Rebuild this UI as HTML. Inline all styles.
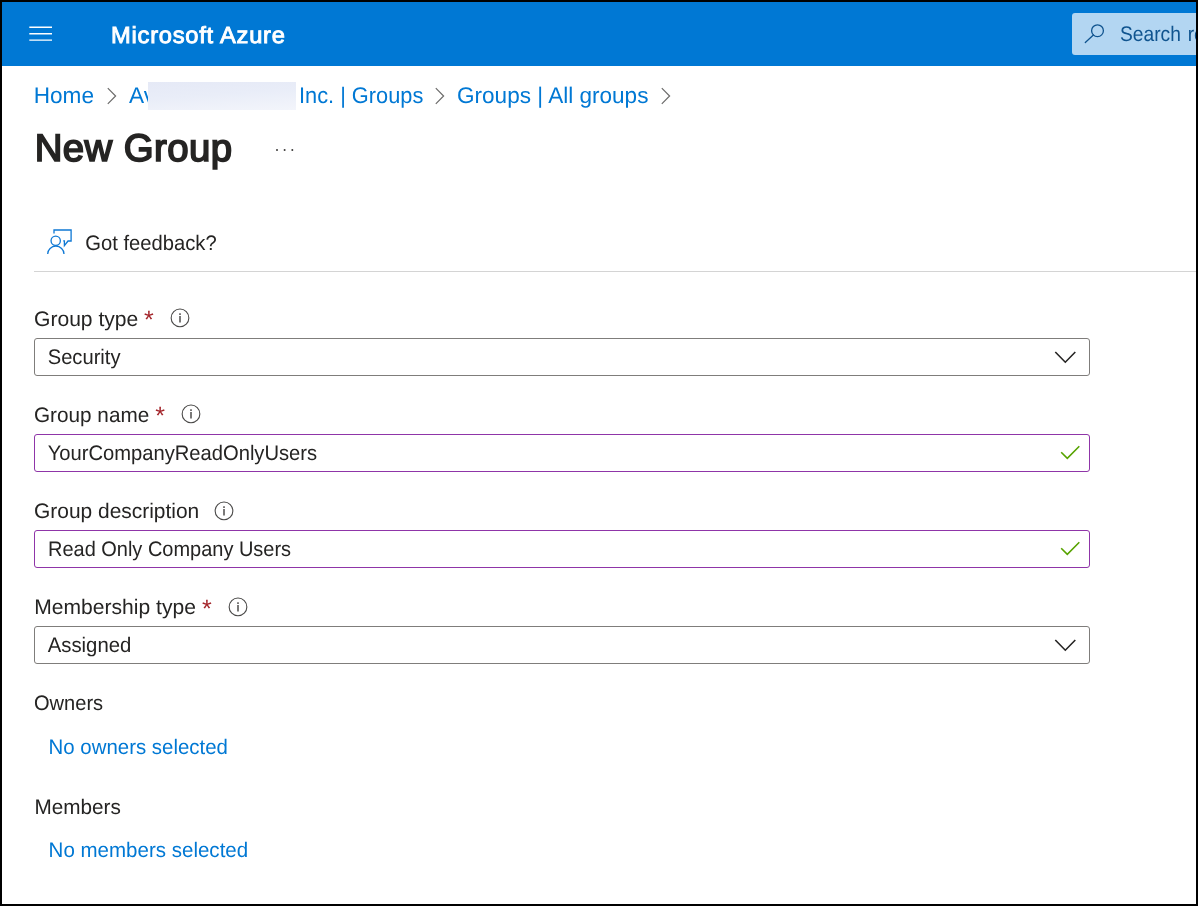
<!DOCTYPE html>
<html lang="en">
<head>
<meta charset="utf-8">
<title>New Group - Microsoft Azure</title>
<style>
*{box-sizing:border-box;margin:0;padding:0}
html,body{width:1198px;height:906px;overflow:hidden;background:#fff}
body{font-family:"Liberation Sans",sans-serif;color:#252423;position:relative;text-rendering:geometricPrecision}
#page{position:absolute;left:0;top:0;width:1198px;height:906px;overflow:hidden;background:#fff;will-change:transform}
.edge{position:absolute;background:#000;z-index:10}
.t{position:absolute;white-space:nowrap;line-height:30px;height:30px;font-size:21px;font-weight:normal;transform-origin:0 50%}
header{position:absolute;left:0;top:0;width:1198px;height:66px;background:#0078d4}
.brand{color:#fff;font-weight:normal;-webkit-text-stroke:.9px #fff;font-size:23.3px;left:111px;top:20px;letter-spacing:.75px;transform:scaleX(1.017)}
.search{position:absolute;left:1072px;top:13px;width:200px;height:42px;border-radius:3px;background:#b3d6f2;overflow:hidden}
.search .t{color:#10548f;left:48px;top:7px;font-size:21px;word-spacing:1.6px;transform:scaleX(.915);transform-origin:0 50%}
.crumb{color:#0078d4;font-size:22.6px;top:81px}
.sep{position:absolute;top:87px;width:12px;height:18px}
.redact{position:absolute;left:148px;top:82px;width:148px;height:28px;background:linear-gradient(176deg,#e5e9f6 0%,#e9edf8 45%,#f3f5fb 100%)}
h1.t{font-size:38.4px;font-weight:normal;-webkit-text-stroke:1.7px #252423;line-height:44px;height:44px;left:34.7px;top:127px;letter-spacing:.4px}
.more{position:absolute;left:275px;top:147.9px;width:20px;height:4px}
.rule{position:absolute;left:34px;top:271px;width:1164px;height:1px;background:#d4d4d4}
.req{color:#a4262c;font-size:25px;letter-spacing:0}
.box{position:absolute;left:34px;width:1056px;height:38px;border:1px solid #7f7d7b;border-radius:3px;background:#fff}
.box.v{border-color:#8f35a8}
.link{color:#0078d4}
svg{position:absolute;overflow:visible}
.info{width:20px;height:20px}
.ind{left:1052px;width:30px;height:20px}
</style>
</head>
<body>
<div id="page">
  <header>
    <svg style="left:29px;top:26px" width="24" height="16" viewBox="0 0 24 16"><path d="M0.3 1.3H23M0.3 7.8H23M0.3 14.1H23" stroke="#fff" stroke-width="1.4" fill="none"/></svg>
    <div class="t brand">Microsoft Azure</div>
    <div class="search">
      <svg style="left:12px;top:10px" width="28" height="24" viewBox="0 0 28 24"><circle cx="13.5" cy="7.7" r="5.9" fill="none" stroke="#10548f" stroke-width="1.3"/><path d="M9.4 12 L1.3 19.5" stroke="#10548f" stroke-width="1.3" fill="none" stroke-linecap="round"/></svg>
      <div class="t">Search resources, services, and docs (G+/)</div>
    </div>
  </header>

  <nav>
    <div class="t crumb" style="left:33.7px">Home</div>
    <svg class="sep" style="left:106px" viewBox="0 0 12 18"><path d="M1.8 1.2 L9.6 9 L1.8 16.8" fill="none" stroke="#6b6a69" stroke-width="1.2"/></svg>
    <div class="t crumb" style="left:129px">Av</div>
    <div class="redact"></div>
    <div class="t crumb" style="left:299px;transform:scaleX(.964)">Inc. | Groups</div>
    <svg class="sep" style="left:434px" viewBox="0 0 12 18"><path d="M1.8 1.2 L9.6 9 L1.8 16.8" fill="none" stroke="#6b6a69" stroke-width="1.2"/></svg>
    <div class="t crumb" style="left:457px;transform:scaleX(.9985)">Groups | All groups</div>
    <svg class="sep" style="left:660px" viewBox="0 0 12 18"><path d="M1.8 1.2 L9.6 9 L1.8 16.8" fill="none" stroke="#6b6a69" stroke-width="1.2"/></svg>
  </nav>

  <h1 class="t">New Group</h1>
  <svg class="more" viewBox="0 0 20 4"><circle cx="2" cy="2" r="1" fill="#3b3a39"/><circle cx="9.6" cy="2" r="1" fill="#3b3a39"/><circle cx="17.3" cy="2" r="1" fill="#3b3a39"/></svg>

  <svg style="left:46px;top:228px" width="28" height="28" viewBox="0 0 28 28"><g fill="none" stroke="#0f78d4" stroke-width="1.3"><path d="M8 5.6 V2 H25.1 V13 H22 L18.4 17.6 V12.9 H17.2"/><circle cx="9.7" cy="12.7" r="4.65"/><path d="M1.7 25.9 A8.15 7.7 0 0 1 18 25.9"/></g></svg>
  <div class="t" style="left:85px;top:229px;transform:translateX(.3px) scaleX(.962)">Got feedback?</div>
  <div class="rule"></div>

  <div class="t lbl" style="left:34px;top:305px;transform:scaleX(1.004)">Group type</div>
  <div class="t req" style="left:144px;top:305px">*</div>
  <svg class="info" style="left:169.5px;top:308.4px" viewBox="0 0 20 20"><circle cx="10" cy="9.9" r="8.85" fill="none" stroke="#4a4948" stroke-width="1.1"/><path d="M10 8V14.5M10 5.3V6.9" stroke="#2b2a29" stroke-width="1.25" fill="none"/></svg>
  <div class="box" style="top:338px"></div>
  <div class="t val" style="left:47px;top:343px;transform:translateX(.7px) scaleX(.96)">Security</div>
  <svg class="ind" style="top:347px" viewBox="0 0 30 20"><path d="M3.3 5 L13.3 15.2 L23.3 5" fill="none" stroke="#252423" stroke-width="1.6"/></svg>

  <div class="t lbl" style="left:34px;top:401px;transform:scaleX(.987)">Group name</div>
  <div class="t req" style="left:155.2px;top:401px">*</div>
  <svg class="info" style="left:180.5px;top:404.4px" viewBox="0 0 20 20"><circle cx="10" cy="9.9" r="8.85" fill="none" stroke="#4a4948" stroke-width="1.1"/><path d="M10 8V14.5M10 5.3V6.9" stroke="#2b2a29" stroke-width="1.25" fill="none"/></svg>
  <div class="box v" style="top:434px"></div>
  <div class="t val" style="left:47px;top:439px;transform:translateX(.67px) scaleX(.9605)">YourCompanyReadOnlyUsers</div>
  <svg class="ind" style="top:443px" viewBox="0 0 30 20"><path d="M9.2 9.2 L15.3 15.3 L27.3 3.3" fill="none" stroke="#57a300" stroke-width="1.6"/></svg>

  <div class="t lbl" style="left:34px;top:497px;transform:scaleX(.997)">Group description</div>
  <svg class="info" style="left:213.5px;top:501.4px" viewBox="0 0 20 20"><circle cx="10" cy="9.9" r="8.85" fill="none" stroke="#4a4948" stroke-width="1.1"/><path d="M10 8V14.5M10 5.3V6.9" stroke="#2b2a29" stroke-width="1.25" fill="none"/></svg>
  <div class="box v" style="top:530px"></div>
  <div class="t val" style="left:48px;top:535px;transform:scaleX(.951)">Read Only Company Users</div>
  <svg class="ind" style="top:539px" viewBox="0 0 30 20"><path d="M9.2 9.2 L15.3 15.3 L27.3 3.3" fill="none" stroke="#57a300" stroke-width="1.6"/></svg>

  <div class="t lbl" style="left:34px;top:593px;transform:translateX(.3px) scaleX(1.003)">Membership type</div>
  <div class="t req" style="left:202px;top:594px">*</div>
  <svg class="info" style="left:227.5px;top:597.4px" viewBox="0 0 20 20"><circle cx="10" cy="9.9" r="8.85" fill="none" stroke="#4a4948" stroke-width="1.1"/><path d="M10 8V14.5M10 5.3V6.9" stroke="#2b2a29" stroke-width="1.25" fill="none"/></svg>
  <div class="box" style="top:626px"></div>
  <div class="t val" style="left:47px;top:631px;transform:translateX(.7px) scaleX(.968)">Assigned</div>
  <svg class="ind" style="top:635px" viewBox="0 0 30 20"><path d="M3.3 5 L13.3 15.2 L23.3 5" fill="none" stroke="#252423" stroke-width="1.6"/></svg>

  <div class="t lbl" style="left:34px;top:689px;transform:scaleX(.955)">Owners</div>
  <div class="t link" style="left:48px;top:733px;transform:translateX(.6px) scaleX(.972)">No owners selected</div>
  <div class="t lbl" style="left:34px;top:793px;transform:translateX(.5px) scaleX(.987)">Members</div>
  <div class="t link" style="left:48px;top:836px;transform:translateX(.6px) scaleX(.977)">No members selected</div>

  <div class="edge" style="left:0;top:0;width:1198px;height:2px"></div>
  <div class="edge" style="left:0;top:904px;width:1198px;height:2px"></div>
  <div class="edge" style="left:0;top:0;width:2px;height:906px"></div>
  <div class="edge" style="left:1196px;top:0;width:2px;height:906px"></div>
</div>
</body>
</html>
